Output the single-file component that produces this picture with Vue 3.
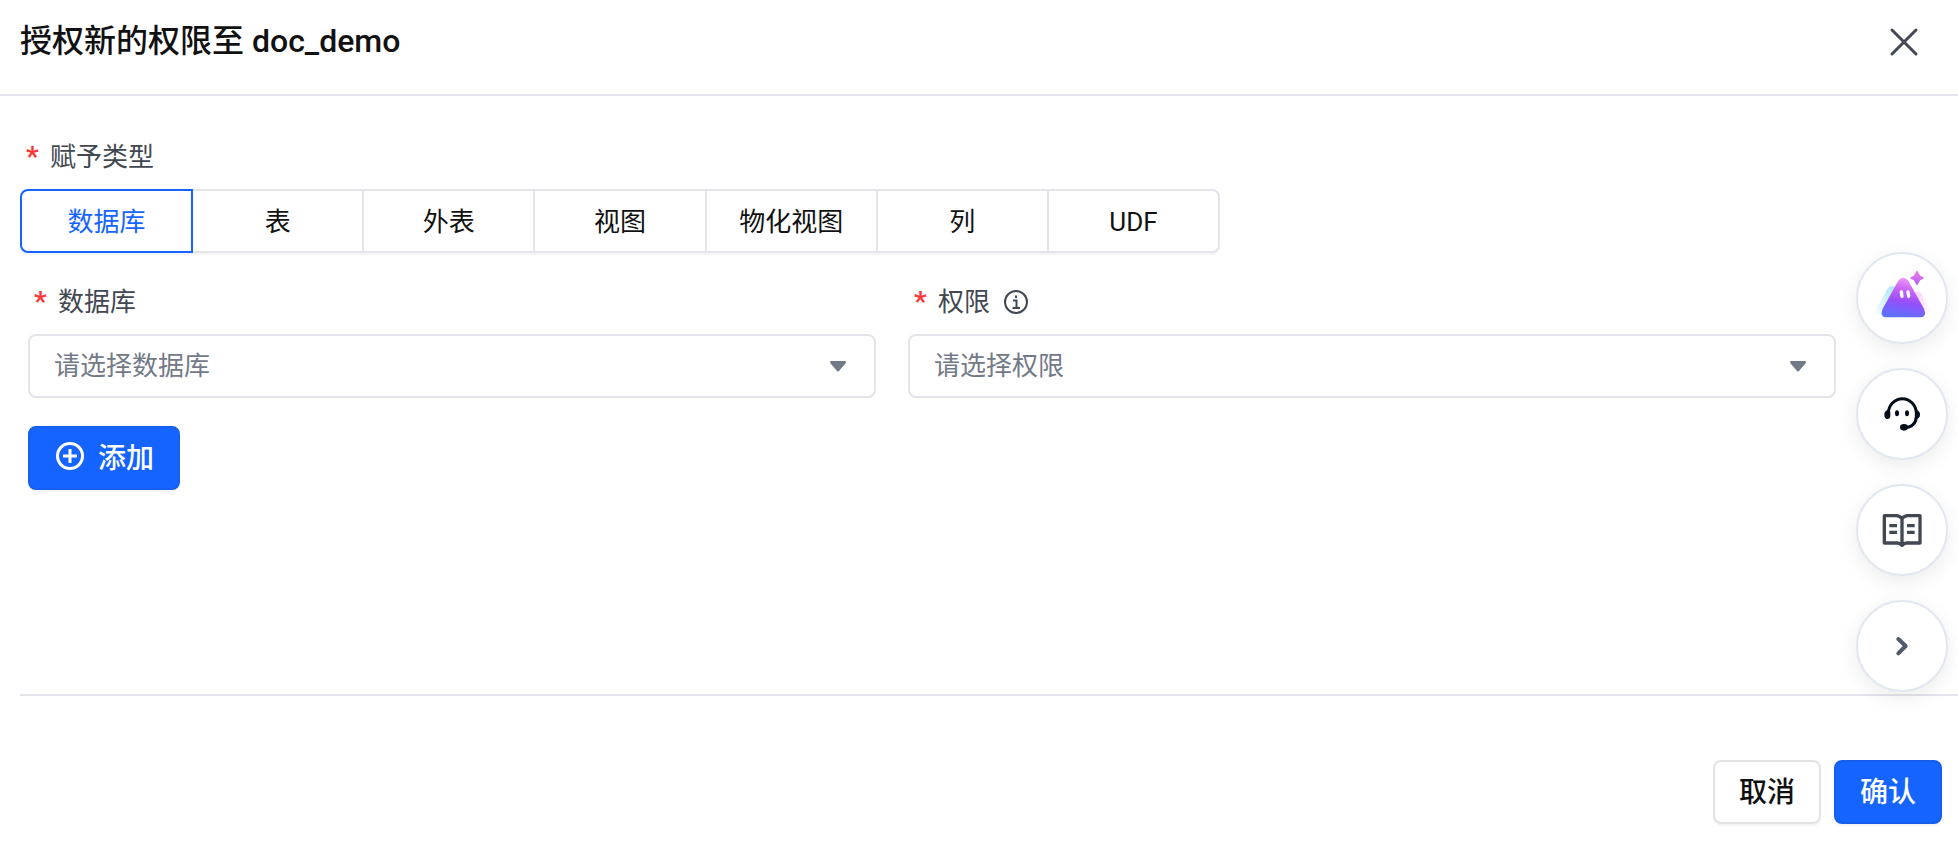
<template>
  <div class="dialog">
    <header class="dialog-header">
      <h1 class="title">授权新的权限至 doc_demo</h1>
      <button class="close" type="button" aria-label="关闭">
        <svg viewBox="0 0 32 32">
          <path d="M4 4 28 28M28 4 4 28" />
        </svg>
      </button>
    </header>

    <main class="dialog-body">
      <div id="grant-type" class="label">
        <span class="required">*</span>赋予类型
      </div>
      <div class="tabs" role="radiogroup" aria-labelledby="grant-type">
        <label
          v-for="item in types"
          :key="item"
          class="tab"
          :class="{ active: item === type }"
        >
          <input v-model="type" type="radio" name="type" :value="item" />
          {{ item }}
        </label>
      </div>

      <div class="row">
        <div class="field field-db">
          <label class="label" for="database">
            <span class="required">*</span>数据库
          </label>
          <div class="select">
            <select id="database" v-model="database">
              <option value="" disabled>请选择数据库</option>
              <option value="doc_demo">doc_demo</option>
            </select>
            <svg class="arrow" viewBox="0 0 16 12">
              <path d="M1 0H15Q17 1 15 3L9 10Q8 11 7 10L1 3Q-1 1 1 0Z" />
            </svg>
          </div>
        </div>

        <div class="field field-privilege">
          <label class="label" for="privilege">
            <span class="required">*</span>权限
            <svg class="info" viewBox="0 0 24 24">
              <circle cx="12" cy="12" r="11" />
              <path d="M9 10.5H12.5V18M8.5 18H16M12 5.5V8" />
            </svg>
          </label>
          <div class="select">
            <select id="privilege" v-model="privilege">
              <option value="" disabled>请选择权限</option>
              <option value="select">SELECT</option>
            </select>
            <svg class="arrow" viewBox="0 0 16 12">
              <path d="M1 0H15Q17 1 15 3L9 10Q8 11 7 10L1 3Q-1 1 1 0Z" />
            </svg>
          </div>
        </div>
      </div>

      <button class="btn primary add" type="button">
        <svg viewBox="0 0 28 28">
          <circle cx="14" cy="14" r="12.5" />
          <path d="M14 7V21M7 14H21" />
        </svg>
        添加
      </button>
    </main>

    <footer class="dialog-footer">
      <button class="btn" type="button">取消</button>
      <button class="btn primary" type="button">确认</button>
    </footer>

    <nav class="float-bar">
      <button type="button" aria-label="AI 助手">
        <svg viewBox="0 0 264 264">
          <defs>
            <linearGradient id="body" x1="0.6" y1="0" x2="0.4" y2="1">
              <stop offset="0" stop-color="#f29af3" />
              <stop offset="0.3" stop-color="#c964f8" />
              <stop offset="0.6" stop-color="#974ffb" />
              <stop offset="1" stop-color="#5b72fc" />
            </linearGradient>
            <linearGradient id="left" x1="0.5" y1="0" x2="0.3" y2="1">
              <stop offset="0" stop-color="#b4e8f8" />
              <stop offset="1" stop-color="#effbfe" />
            </linearGradient>
            <linearGradient id="right" x1="0" y1="0" x2="0.4" y2="1">
              <stop offset="0" stop-color="#fbd3f6" />
              <stop offset="1" stop-color="#fff5fd" />
            </linearGradient>
            <linearGradient id="star" x1="0" y1="0" x2="0" y2="1">
              <stop offset="0" stop-color="#f07fe6" />
              <stop offset="1" stop-color="#b45cf5" />
            </linearGradient>
          </defs>
          <path fill="url(#left)" d="M88 105Q94 96 104 97H118L72 180H58Q50 178 56 164Z" />
          <path fill="url(#right)" d="M170 113H180Q188 113 192 122L214 164Q222 178 208 178H196Z" />
          <path
            fill="url(#body)"
            d="M121 80Q136 62 151 80L198 164Q208 190 186 190H86Q64 190 74 164Z"
          />
          <path
            fill="url(#star)"
            d="M177 50Q181 50 182 58Q185 67 194 68Q200 71 194 75Q185 77 182 86Q177 100 172 86Q169 77 160 75Q154 71 160 68Q169 67 172 58Q173 50 177 50Z"
          />
          <path stroke="#fff" stroke-width="10" stroke-linecap="round" d="M130 114 132 127M150 114 152 127" />
        </svg>
      </button>
      <button type="button" aria-label="在线客服">
        <svg viewBox="0 0 264 264" fill="#030d1a">
          <path
            fill="none"
            stroke="#030d1a"
            stroke-width="9"
            d="M91 130A42 44 0 0 1 175 130V140Q173 172 138 173"
          />
          <path d="M90 120Q97 120 97 128V138Q97 147 88 147Q79 146 79 134Q79 122 90 120Z" />
          <path d="M174 120Q186 122 186 134Q186 146 173 147Z" />
          <ellipse cx="138" cy="172" rx="12" ry="10" />
          <ellipse cx="117" cy="130" rx="6" ry="9" />
          <ellipse cx="147" cy="130" rx="6" ry="9" />
        </svg>
      </button>
      <button type="button" aria-label="文档">
        <svg viewBox="0 0 264 264" fill="none" stroke="#424852" stroke-width="10">
          <path
            stroke-linejoin="round"
            d="M79 89H116Q127 90 132 99Q137 90 148 89H186V171H146Q138 171 132 178Q126 171 118 171H79ZM132 99V178"
          />
          <path d="M94 119H117M94 139H117M147 119H170M147 139H170" />
        </svg>
      </button>
      <button type="button" aria-label="收起">
        <svg viewBox="0 0 264 264" fill="none" stroke="#4f5a6b" stroke-width="12">
          <path stroke-linecap="round" stroke-linejoin="round" d="M121 111 143 132 121 154" />
        </svg>
      </button>
    </nav>
  </div>
</template>

<script setup>
import { ref } from 'vue'

const types = ['数据库', '表', '外表', '视图', '物化视图', '列', 'UDF']
const type = ref('数据库')
const database = ref('')
const privilege = ref('')
</script>

<style>
body {
  margin: 0;
  background: #fff;
}
</style>

<style scoped>
* {
  box-sizing: border-box;
}

.dialog {
  position: relative;
  display: flex;
  flex-direction: column;
  min-height: 100vh;
  font-family: Roboto, "Noto Sans CJK SC", sans-serif;
  font-size: 26px;
  color: #111;
}

button,
select {
  font-family: inherit;
  cursor: pointer;
}

.dialog-header {
  display: flex;
  align-items: flex-start;
  justify-content: space-between;
  height: 96px;
  padding: 18px 38px 0 20px;
  border-bottom: 2px solid #e4e4eb;
}

.title {
  margin: 0;
  font-size: 32px;
  line-height: 46px;
  font-weight: 500;
}

.close {
  display: flex;
  padding: 8px 0;
  border: 0;
  background: none;
}

.close svg {
  width: 32px;
  height: 32px;
  stroke: #424852;
  stroke-width: 3;
  stroke-linecap: round;
}

.dialog-body {
  flex: 1;
  padding: 39px 20px 28px;
}

.label {
  display: flex;
  align-items: center;
  margin-bottom: 10px;
  padding-left: 6px;
  line-height: 44px;
  color: #424852;
}

.required {
  width: 24px;
  font-size: 28px;
  font-weight: 700;
  color: #f93a3a;
}

.info {
  width: 24px;
  height: 24px;
  margin-left: 14px;
  fill: none;
  stroke: #424852;
  stroke-width: 2;
}

.tabs {
  display: flex;
  max-width: 1200px;
  border-radius: 8px;
  box-shadow: 0 2px 0 #f5f5f7;
}

.tab {
  position: relative;
  flex: 1;
  height: 64px;
  border: 2px solid #e4e4eb;
  line-height: 62px;
  text-align: center;
  cursor: pointer;
}

.tab + .tab {
  margin-left: -2px;
}

.tab:first-child {
  border-radius: 8px 0 0 8px;
}

.tab:last-child {
  border-radius: 0 8px 8px 0;
}

.tab.active {
  z-index: 1;
  border-color: #1664ff;
  color: #1664ff;
}

.tab input {
  position: absolute;
  opacity: 0;
}

.row {
  display: flex;
  gap: 32px;
  margin: 27px 102px 28px 8px;
}

.field {
  min-width: 0;
}

.field-db {
  flex: 53;
}

.field-privilege {
  flex: 58;
}

.select {
  position: relative;
}

.select select {
  display: block;
  width: 100%;
  height: 64px;
  padding: 0 64px 0 24px;
  border: 2px solid #e4e4eb;
  border-radius: 8px;
  background: #fff;
  font-size: 26px;
  color: #737a87;
  appearance: none;
}

.arrow {
  position: absolute;
  top: 27px;
  right: 30px;
  width: 16px;
  height: 12px;
  fill: #737a87;
  pointer-events: none;
}

.btn {
  height: 64px;
  padding: 0 24px 4px;
  border: 2px solid #e3e3e3;
  border-radius: 8px;
  background: #fff;
  box-shadow: 0 2px 0 #f5f5f5;
  font-size: 28px;
  font-weight: 500;
  color: #111;
}

.btn.primary {
  border-color: #165fee;
  background: #1664ff;
  color: #fff;
}

.add {
  display: flex;
  align-items: center;
  gap: 14px;
  margin-left: 8px;
  padding-left: 26px;
}

.add svg {
  width: 28px;
  height: 28px;
  fill: none;
  stroke: #fff;
  stroke-width: 3;
}

.dialog-footer {
  display: flex;
  justify-content: flex-end;
  gap: 13px;
  margin-left: 20px;
  padding: 64px 16px 22px;
  border-top: 2px solid #e4e4eb;
}

.float-bar {
  position: absolute;
  top: 252px;
  right: 10px;
  display: flex;
  flex-direction: column;
  gap: 24px;
}

.float-bar button {
  width: 92px;
  height: 92px;
  padding: 0;
  border: 2px solid #e3e7ef;
  border-radius: 50%;
  background: #fff;
  box-shadow: 0 6px 20px rgba(0, 0, 0, 0.08);
}

.float-bar svg {
  display: block;
  width: 88px;
  height: 88px;
}
</style>
